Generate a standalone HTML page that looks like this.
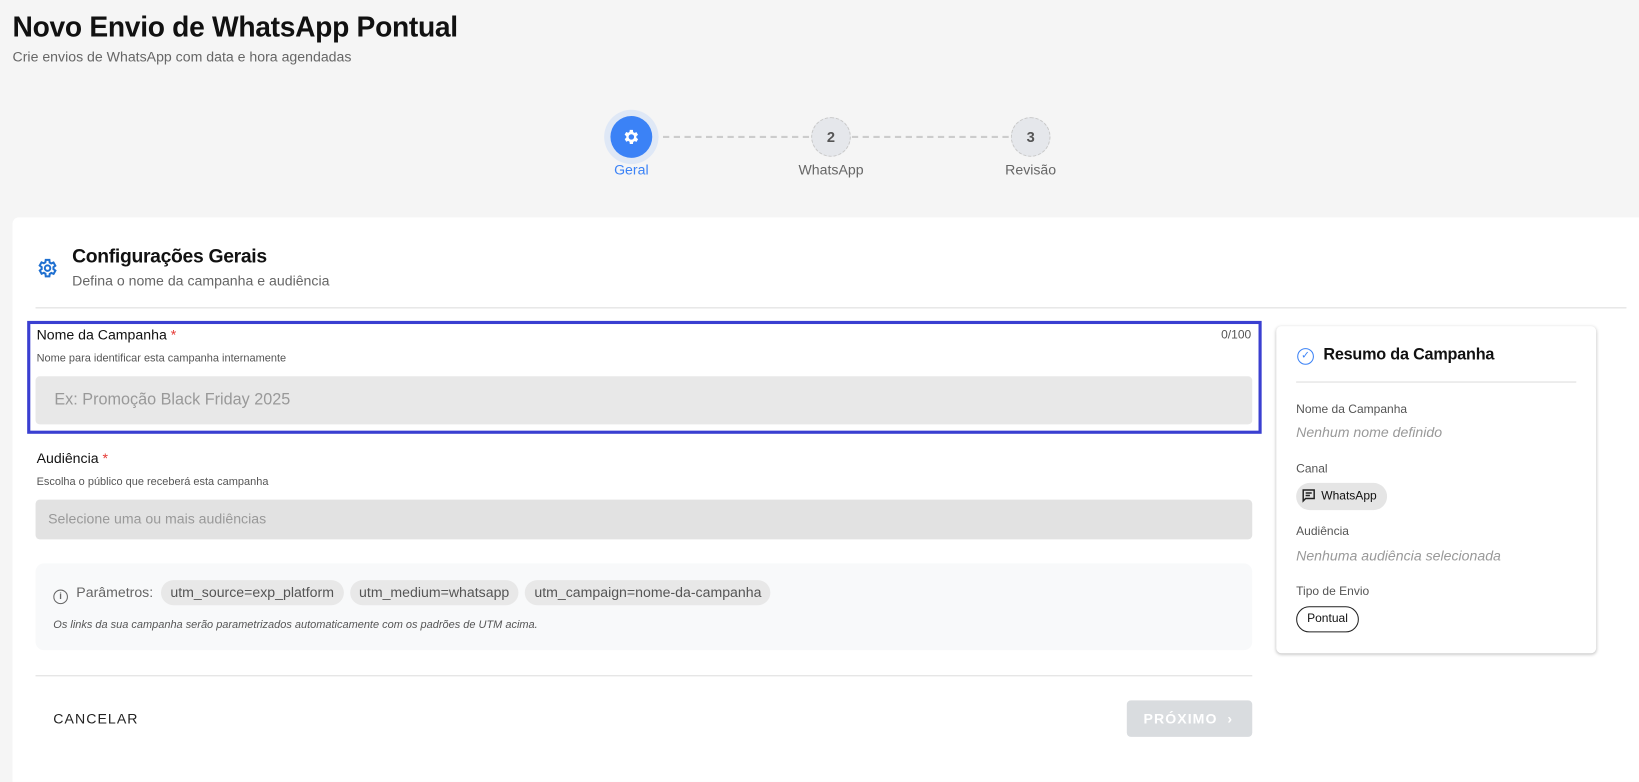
<!DOCTYPE html>
<html><head><meta charset="utf-8"><style>
*{box-sizing:border-box;margin:0;padding:0}
body{width:1639px;height:748px;overflow:hidden;background:#f5f5f5;font-family:"Liberation Sans",Roboto,sans-serif;color:#111}
#w{position:relative;width:1568px;height:716px;transform:scale(1.04528);transform-origin:0 0}
.a{position:absolute}
.chip{display:inline-block;background:#e8e8e8;border-radius:12px;padding:0 9px;height:24px;line-height:24px;color:#555;font-size:13.5px;margin-right:6px}
</style></head><body><div id="w">
<div class="a" style="left:12px;top:11px;font-size:27px;font-weight:bold;color:#111;letter-spacing:-0.3px">Novo Envio de WhatsApp Pontual</div>
<div class="a" style="left:12px;top:47px;font-size:13.5px;color:#666">Crie envios de WhatsApp com data e hora agendadas</div>

<div class="a" style="left:624px;top:130px;width:150px;border-top:2px dashed #ccc"></div>
<div class="a" style="left:815px;top:130px;width:150px;border-top:2px dashed #ccc"></div>
<div class="a" style="left:578px;top:105px;width:52px;height:52px;border-radius:50%;background:#dfe8f6"></div>
<div class="a" style="left:584px;top:111px;width:40px;height:40px;border-radius:50%;background:#3b82f6"></div>
<svg class="a" style="left:595px;top:122px" width="18" height="18" viewBox="0 0 24 24"><path fill="#fff" fill-rule="evenodd" d="M19.4 13a7.5 7.5 0 0 0 0-2l2.1-1.6-2-3.5-2.5 1a7 7 0 0 0-1.7-1L15 3h-4l-.4 2.7a7 7 0 0 0-1.7 1l-2.5-1-2 3.5L6.6 11a7.5 7.5 0 0 0 0 2l-2.1 1.6 2 3.5 2.5-1a7 7 0 0 0 1.7 1L11 21h4l.4-2.7a7 7 0 0 0 1.7-1l2.5 1 2-3.5zM13 15.5a3.5 3.5 0 1 1 0-7 3.5 3.5 0 0 1 0 7z" transform="translate(-1 0)"/></svg>
<div class="a" style="left:776px;top:112px;width:38px;height:38px;border-radius:50%;background:#e5e7eb;border:1px dashed #c8c8c8;text-align:center;line-height:36px;font-weight:bold;font-size:14px;color:#555">2</div>
<div class="a" style="left:967px;top:112px;width:38px;height:38px;border-radius:50%;background:#e5e7eb;border:1px dashed #c8c8c8;text-align:center;line-height:36px;font-weight:bold;font-size:14px;color:#555">3</div>
<div class="a" style="left:574px;top:155px;width:60px;text-align:center;font-size:13.5px;color:#3b82f6">Geral</div>
<div class="a" style="left:745px;top:155px;width:100px;text-align:center;font-size:13.5px;color:#666">WhatsApp</div>
<div class="a" style="left:936px;top:155px;width:100px;text-align:center;font-size:13.5px;color:#666">Revisão</div>

<div class="a" style="left:12px;top:208px;width:1556px;height:540px;background:#fff;border-radius:6px 0 0 0"></div>
<svg class="a" style="left:35px;top:246px" width="21" height="21" viewBox="0 0 24 24"><path fill="none" stroke="#1e6fd0" stroke-width="2.2" d="M19.4 13a7.5 7.5 0 0 0 0-2l2.1-1.6-2-3.5-2.5 1a7 7 0 0 0-1.7-1L15 3h-4l-.4 2.7a7 7 0 0 0-1.7 1l-2.5-1-2 3.5L6.6 11a7.5 7.5 0 0 0 0 2l-2.1 1.6 2 3.5 2.5-1a7 7 0 0 0 1.7 1L11 21h4l.4-2.7a7 7 0 0 0 1.7-1l2.5 1 2-3.5z" transform="translate(-1 0)"/><circle cx="12" cy="12" r="3" fill="none" stroke="#1e6fd0" stroke-width="2.2"/></svg>
<div class="a" style="left:69px;top:234px;font-size:18.5px;font-weight:bold;color:#111;letter-spacing:-0.3px">Configurações Gerais</div>
<div class="a" style="left:69px;top:261px;font-size:13.5px;color:#666">Defina o nome da campanha e audiência</div>
<div class="a" style="left:34px;top:294px;width:1522px;height:1px;background:#ddd"></div>

<div class="a" style="left:26px;top:307px;width:1181px;height:108px;border:3px solid #3a3fd1"></div>
<div class="a" style="left:35px;top:313px;font-size:13.5px;color:#111">Nome da Campanha <span style="color:#e53935">*</span></div>
<div class="a" style="left:1150px;top:315px;width:47px;text-align:right;font-size:11.5px;color:#555">0/100</div>
<div class="a" style="left:35px;top:337px;font-size:10.5px;color:#555">Nome para identificar esta campanha internamente</div>
<div class="a" style="left:34px;top:360px;width:1164px;height:46px;background:#e8e8e8;border-radius:4px;padding-left:18px;line-height:46px;font-size:15.5px;color:#999">Ex: Promoção Black Friday 2025</div>

<div class="a" style="left:35px;top:431px;font-size:13.5px;color:#111">Audiência <span style="color:#e53935">*</span></div>
<div class="a" style="left:35px;top:455px;font-size:10.5px;color:#555">Escolha o público que receberá esta campanha</div>
<div class="a" style="left:34px;top:478px;width:1164px;height:38px;background:#e2e2e2;border-radius:4px;padding-left:12px;line-height:38px;font-size:13.5px;color:#999">Selecione uma ou mais audiências</div>

<div class="a" style="left:34px;top:539px;width:1164px;height:83px;background:#f8f9fa;border-radius:8px"></div>
<div class="a" style="left:51px;top:555px;font-size:13.5px;color:#666;line-height:24px;white-space:nowrap"><span style="display:inline-block;width:14px;height:14px;border:1.5px solid #666;border-radius:50%;font-size:9px;line-height:11px;text-align:center;vertical-align:-2px;margin-right:8px;font-weight:bold">i</span>Parâmetros: &nbsp;<span class="chip">utm_source=exp_platform</span><span class="chip">utm_medium=whatsapp</span><span class="chip">utm_campaign=nome-da-campanha</span></div>
<div class="a" style="left:51px;top:592px;font-size:10.5px;font-style:italic;color:#555">Os links da sua campanha serão parametrizados automaticamente com os padrões de UTM acima.</div>
<div class="a" style="left:34px;top:646px;width:1164px;height:1px;background:#ddd"></div>

<div class="a" style="left:51px;top:680px;font-size:13.5px;letter-spacing:1px;color:#222">CANCELAR</div>
<div class="a" style="left:1078px;top:670px;width:120px;height:35px;background:#d9dcdf;border-radius:4px;color:#fff;font-size:13.5px;font-weight:bold;letter-spacing:1px;line-height:35px;padding-left:16px">PRÓXIMO &nbsp;›</div>

<div class="a" style="left:1221px;top:312px;width:306px;height:313px;background:#fff;border-radius:5px;box-shadow:0 1px 3px rgba(0,0,0,.25)"></div>
<div class="a" style="left:1241px;top:333px;width:16px;height:16px;border:1.5px solid #3b82f6;border-radius:50%;color:#3b82f6;font-size:10px;line-height:13px;text-align:center">✓</div>
<div class="a" style="left:1266px;top:331px;font-size:15.5px;font-weight:bold;color:#111;letter-spacing:-0.2px">Resumo da Campanha</div>
<div class="a" style="left:1240px;top:365px;width:268px;height:1px;background:#ddd"></div>
<div class="a" style="left:1240px;top:386px;font-size:11.5px;color:#555">Nome da Campanha</div>
<div class="a" style="left:1240px;top:406px;font-size:13.5px;font-style:italic;color:#999">Nenhum nome definido</div>
<div class="a" style="left:1240px;top:443px;font-size:11.5px;color:#555">Canal</div>
<div class="a" style="left:1240px;top:462px;width:87px;height:26px;background:#e5e5e5;border-radius:13px;font-size:11.5px;line-height:26px;padding-left:24px;color:#111">WhatsApp</div>
<svg class="a" style="left:1245px;top:467px" width="14" height="14" viewBox="0 0 24 24"><path fill="none" stroke="#222" stroke-width="2.4" d="M3 3h18v14H7l-4 4zM7 8h10M7 12h7"/></svg>
<div class="a" style="left:1240px;top:503px;font-size:11.5px;color:#555">Audiência</div>
<div class="a" style="left:1240px;top:524px;font-size:13.5px;font-style:italic;color:#999">Nenhuma audiência selecionada</div>
<div class="a" style="left:1240px;top:560px;font-size:11.5px;color:#555">Tipo de Envio</div>
<div class="a" style="left:1240px;top:580px;width:60px;height:25px;border:1px solid #222;border-radius:13px;font-size:11.5px;line-height:23px;text-align:center;color:#111">Pontual</div>
</div></body></html>
